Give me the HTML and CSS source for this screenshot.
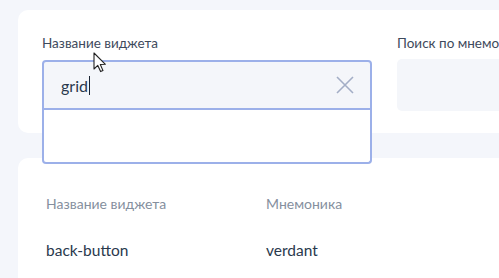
FILE: index.html
```html
<!DOCTYPE html>
<html lang="ru">
<head>
<meta charset="utf-8">
<link rel="stylesheet" href="styles.css">
</head>
<body>
<div class="page">
  <section class="card filters">
    <div class="field field-name">
      <label class="label">Название виджета</label>
      <div class="combo">
        <div class="combo-input">
          <span class="value">grid</span><span class="caret"></span>
          <svg class="clear" width="18" height="18" viewBox="0 0 18 18"><path d="M1 1L17 17M17 1L1 17" stroke="#a3aec6" stroke-width="1.6" fill="none"/></svg>
        </div>
        <div class="combo-list"></div>
      </div>
    </div>
    <div class="field field-mnem">
      <label class="label">Поиск по мнемонике</label>
      <div class="plain-input"></div>
    </div>
  </section>
  <section class="card table">
    <div class="row head">
      <div class="cell c1">Название виджета</div>
      <div class="cell c2">Мнемоника</div>
    </div>
    <div class="row body">
      <div class="cell c1">back-button</div>
      <div class="cell c2">verdant</div>
    </div>
  </section>
</div>
<svg class="pointer" width="14" height="22" viewBox="0 0 14 22"><path d="M1 1L1 17L4.8 13.4L7.6 19.6L10 18.6L7.3 12.5L12.4 12.3Z" fill="#fff" stroke="#222" stroke-width="1.1" stroke-linejoin="round"/></svg>
</body>
</html>
```
FILE: styles.css
```css
html, body {
  margin: 0;
  padding: 0;
  background: #f4f6fb;
  font-family: Lato, "Noto Sans", sans-serif;
  overflow: hidden;
}
.page {
  padding: 10px 0 0 18px;
  display: flex;
  flex-direction: column;
  gap: 25px;
  width: 600px;
}
.card {
  background: #fff;
  border-radius: 10px;
}
.filters {
  height: 123px;
  box-sizing: border-box;
  padding: 25px 0 0 24px;
  display: flex;
  gap: 25px;
}
.field {
  display: flex;
  flex-direction: column;
}
.label {
  font-size: 13.5px;
  line-height: 16px;
  color: #3e4a5c;
  height: 25px;
  white-space: nowrap;
}
.field-name { width: 330px; }
.field-mnem { width: 200px; }
.combo {
  position: relative;
}
.combo-input {
  height: 50px;
  box-sizing: border-box;
  border: 2px solid #9cb0e9;
  border-radius: 4px 4px 0 0;
  background: #f4f6fa;
  display: flex;
  align-items: center;
  padding: 0 16px 0 17px;
}
.value {
  font-size: 16px;
  color: #2a394d;
}
.caret {
  width: 1px;
  height: 19px;
  background: #1a2433;
  margin-left: 1px;
}
.clear {
  margin-left: auto;
}
.combo-list {
  position: absolute;
  left: 0;
  right: 0;
  top: 50px;
  height: 54px;
  box-sizing: border-box;
  border: 2px solid #9cb0e9;
  border-top: none;
  border-radius: 0 0 4px 4px;
  background: #fff;
  z-index: 2;
}
.plain-input {
  height: 52px;
  border-radius: 5px;
  background: #f4f6fa;
  margin-top: -1px;
}
.table {
  height: 140px;
  padding: 38px 0 0 28px;
}
.row {
  display: flex;
}
.cell.c1 { width: 220px; }
.head {
  font-size: 14px;
  line-height: 16px;
  color: #858f9e;
  height: 45px;
}
.body {
  font-size: 15.5px;
  line-height: 18px;
  color: #2a394d;
}
.pointer {
  position: absolute;
  left: 93px;
  top: 52px;
  z-index: 5;
}
```
